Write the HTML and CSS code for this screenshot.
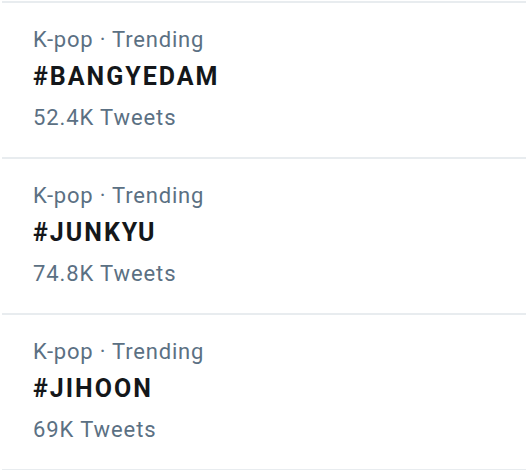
FILE: index.html
```html
<!DOCTYPE html>
<html>
<head>
<meta charset="utf-8">
<link rel="stylesheet" href="styles.css">
</head>
<body>
<div class="list">
  <div class="item">
    <div class="meta">K-pop · Trending</div>
    <div class="tag">#BANGYEDAM</div>
    <div class="count">52.4K Tweets</div>
  </div>
  <div class="item">
    <div class="meta">K-pop · Trending</div>
    <div class="tag">#JUNKYU</div>
    <div class="count">74.8K Tweets</div>
  </div>
  <div class="item">
    <div class="meta">K-pop · Trending</div>
    <div class="tag">#JIHOON</div>
    <div class="count">69K Tweets</div>
  </div>
  <div class="end"></div>
</div>
</body>
</html>
```
FILE: styles.css
```css
html, body {
  margin: 0;
  padding: 0;
  background: #ffffff;
}
body {
  font-family: Roboto, "Liberation Sans", sans-serif;
  font-size: 22px;
}
.list {
  margin: 1px 1px 0 2px;
}
.item {
  border-top: 2px solid #e8ecef;
  padding: 23px 0 25px 31px;
}
.meta, .tag, .count {
  line-height: 28px;
  white-space: nowrap;
}
.meta {
  color: #5b7083;
  letter-spacing: 0.8px;
}
.tag {
  margin-top: 9px;
  color: #14171a;
  font-size: 25px;
  font-weight: 700;
  letter-spacing: 2px;
}
.count {
  margin-top: 13px;
  color: #5b7083;
  letter-spacing: 0.9px;
}
.end {
  border-top: 2px solid #e8ecef;
}
```
